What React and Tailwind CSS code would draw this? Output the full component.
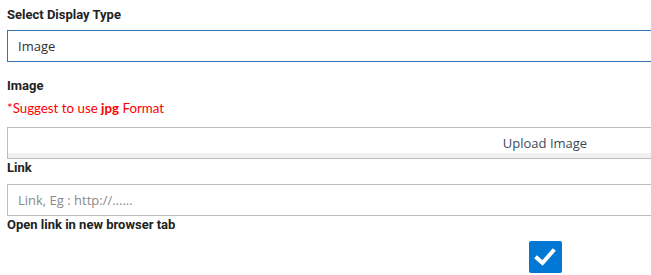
export default function App() {
  const label = "block text-[13px] leading-[18px] font-bold text-[#222222] [font-family:Roboto,sans-serif]";
  const input = "[font-family:'Open_Sans',sans-serif] text-[13px] leading-[18px]";
  return (
    <div className="w-[651px] h-[275px] overflow-hidden bg-white">
      <div className="w-[1076px] ml-[7px]">
        <div className={`${label} mt-[6px]`}>Select Display Type</div>
        <div className="mt-[6px] h-[32px] border border-[#3474b2] pl-[10px] pt-[6px]">
          <span className={`${input} block text-[#333333]`}>Image</span>
        </div>
        <div className={`${label} mt-[15px]`}>Image</div>
        <div className="mt-[4px] text-[13.3px] leading-[18px] text-[#ff0000] [font-family:Lato,'Noto_Sans',sans-serif]">
          *Suggest to use <span className="font-bold">jpg</span> Format
        </div>
        <div className="mt-[10px] h-[32px] border border-[#bdbdbd] flex flex-col">
          <div className="h-[25px] pt-[6px] flex justify-center">
            <span className={`${input} text-[#3d4a5c]`}>Upload Image</span>
          </div>
          <div className="h-[5px] bg-[#f0f0f0]" />
        </div>
        <div className={`${label} mt-0`}>Link</div>
        <div className="mt-[7px] h-[32px] border border-[#bdbdbd] pl-[10px] pt-[6px]">
          <span className={`${input} block text-[#8a8a8a]`}>Link, Eg : http://......</span>
        </div>
        <div className={`${label} mt-0`}>Open link in new browser tab</div>
        <div className="mt-[7px] flex justify-center">
          <div className="w-[33px] h-[32px] rounded-[2px] bg-[#0078d4] flex items-center justify-center">
            <svg width="22" height="20" viewBox="0 0 22 20">
              <path d="M3 11 L8.5 16 L19 4" fill="none" stroke="white" strokeWidth="4" strokeLinecap="square" strokeLinejoin="miter" />
            </svg>
          </div>
        </div>
      </div>
    </div>
  );
}
